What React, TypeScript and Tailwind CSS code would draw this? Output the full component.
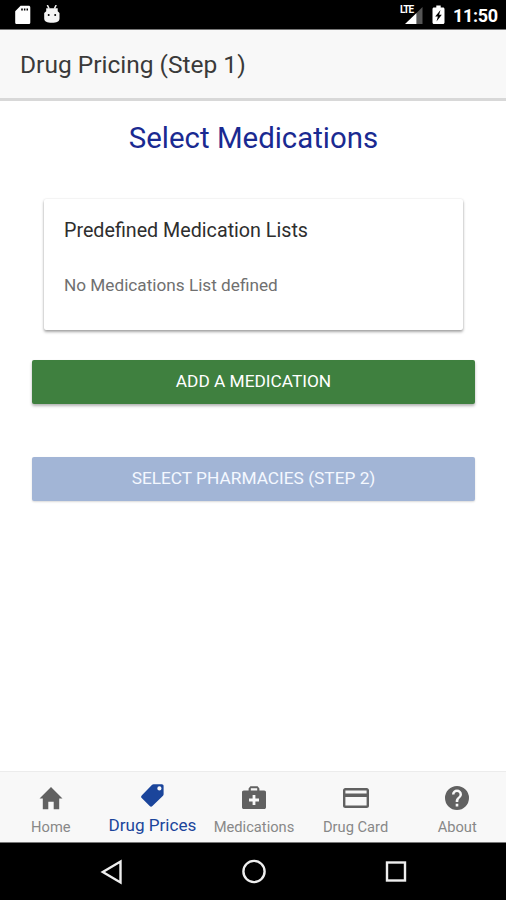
import type { ReactNode } from 'react'

const TABS: { label: string; icon: ReactNode; active?: boolean }[] = [
    {
        label: 'Home',
        icon: <path d="M13 2 24.500 13.600h-3.300v10.700h-5.500v-7.500h-5.400v7.500H4.800V13.600H1.500z" />,
    },
    {
        label: 'Drug Prices',
        active: true,
        icon: (
            <path
                fillRule="evenodd"
                d="M14.600 1.200h8.200c1.100 0 1.800.7 1.800 1.800v8.200c0 .6-.2 1.100-.6 1.500L13.400 23.100c-.8.8-1.900.8-2.700 0l-8-8c-.8-.8-.8-1.900 0-2.700L13.100 1.800c.4-.4.9-.6 1.500-.6zM20.400 3.300a2.100 2.100 0 1 0 0 4.200 2.100 2.100 0 0 0 0-4.200z"
            />
        ),
    },
    {
        label: 'Medications',
        icon: (
            <path
                fillRule="evenodd"
                d="M7.600 5.600V3.400L9.400 1.200h7.200l1.800 2.200v2.200h4.800c1.100 0 1.800.8 1.800 1.800v14.800c0 1.100-.7 1.900-1.800 1.900H2.800c-1.100 0-1.800-.8-1.800-1.900V7.400c0-1 .7-1.800 1.800-1.800zM9.800 5.600h6.400V3.300H9.800zM11.600 10v3.600H8v2.800h3.600V20h2.800v-3.600H18v-2.800h-3.600V10z"
            />
        ),
    },
    {
        label: 'Drug Card',
        icon: (
            <path
                fillRule="evenodd"
                d="M2.300 3h21.400C25 3 26 4 26 5.300v15.400c0 1.300-1 2.300-2.300 2.300H2.300C1 23 0 22 0 20.700V5.300C0 4 1 3 2.300 3zM2.400 5.400v3.100h21.200V5.400zM2.400 12v8.600h21.200V12z"
            />
        ),
    },
    {
        label: 'About',
        icon: (
            <path
                fillRule="evenodd"
                d="M13 1a12 12 0 1 0 0 24 12 12 0 0 0 0-24zM11.700 21.400v-2.600h2.600v2.600zM17 12.100l-1.200 1.200c-1 1-1.500 1.800-1.500 3.600h-2.600v-.6c0-1.500.6-2.600 1.500-3.500l1.600-1.600c.5-.4.7-1 .7-1.600a2.500 2.500 0 0 0-5 0H8a5 5 0 0 1 10 0c0 1-.4 1.800-1 2.500z"
            />
        ),
    },
]

function StatusBar() {
    return (
        <div className="flex h-[30px] shrink-0 items-center border-b border-[#777] bg-black pl-[15px] pr-[8px] text-white">
            <svg width="16" height="20" viewBox="0 0 16 20" fill="currentColor">
                <path
                    fillRule="evenodd"
                    d="M5.600.7h8C14.600.7 15.300 1.400 15.300 2.400v15c0 1-.7 1.700-1.700 1.700H1.900c-1 0-1.700-.7-1.700-1.700V6.200zM6.200 3.400v2h1.600v-2zM8.900 3.400v2h1.500v-2zM11.500 3.400v2H13v-2z"
                />
            </svg>
            <svg className="ml-[12px]" width="18" height="20" viewBox="0 0 18 20">
                <path d="m4.300 0 1.800 3.600M13.200 0l-1.800 3.600" stroke="#eee" strokeWidth="1.500" />
                <path
                    d="M3.200 3.200h11.500v3l1.800 1.800v5.400c0 2.900-2.800 4.300-7.600 4.300S1.200 16.300 1.200 13.400V8l2-1.800z"
                    fill="#f5f5f5"
                />
                <circle cx="5.700" cy="10.100" r="1" />
                <circle cx="12.200" cy="10.100" r="1" />
            </svg>

            <div className="relative ml-auto h-[20px] w-[24px]">
                <svg width="24" height="20" viewBox="0 0 24 20">
                    <path d="M21.500 2v17h-6V8z" fill="#555" />
                    <path d="M15.500 8v11H4z" fill="#fff" />
                </svg>
                <span className="absolute left-[-1px] top-0 text-[10px] font-bold leading-[10px] tracking-[-1px]">
                    LTE
                </span>
            </div>
            <svg className="ml-[7px]" width="13" height="20" viewBox="0 0 13 20">
                <path
                    d="M4.300.5h4.400v2h2.300c.9 0 1.500.6 1.500 1.500v13.600c0 .9-.6 1.500-1.500 1.500H2c-.9 0-1.500-.6-1.500-1.500V4c0-.9.6-1.500 1.500-1.500h2.300z"
                    fill="#fff"
                />
                <path d="M8.500 5 3.200 11.600h2.700L4.500 16.500l5.300-6.800H7.100z" fill="#000" />
            </svg>
            <span className="ml-[8px] w-[45px] whitespace-nowrap pt-[3px] text-[18px] font-bold leading-none tracking-[-0.3px]">
                11:50
            </span>
        </div>
    )
}

function TabBar() {
    return (
        <nav className="grid h-[71px] w-[508px] shrink-0 grid-cols-5 border-t border-[#ececec] bg-[#f8f8f8]">
            {TABS.map(({ label, icon, active }) => (
                <div
                    key={label}
                    className={`flex flex-col items-center whitespace-nowrap ${
                        active ? 'pt-[11px] text-[#1b459b]' : 'pt-[13px] text-[#616161]'
                    }`}
                >
                    <svg width="26" height="26" viewBox="0 0 26 26" fill="currentColor">
                        {icon}
                    </svg>
                    <span
                        className={
                            active
                                ? 'mt-[6px] text-[17.100px] leading-[20px]'
                                : 'mt-[7px] text-[14.700px] leading-[18px] text-[#888]'
                        }
                    >
                        {label}
                    </span>
                </div>
            ))}
        </nav>
    )
}

function SystemNav() {
    return (
        <div className="flex h-[58px] shrink-0 items-center justify-between border-t border-[#777] bg-black pl-[99px] pr-[97px]">
            <svg width="26" height="26" viewBox="0 0 26 26" fill="none" stroke="#eee" strokeWidth="2.400">
                <path d="M21.500 2.500v21L3.800 13z" />
            </svg>
            <svg width="26" height="26" viewBox="0 0 26 26" fill="none" stroke="#eee" strokeWidth="2.400">
                <circle cx="13" cy="12.500" r="10.600" />
            </svg>
            <svg width="26" height="26" viewBox="0 0 26 26" fill="none" stroke="#eee" strokeWidth="2.400">
                <rect x="4" y="3.500" width="18" height="18" />
            </svg>
        </div>
    )
}

export default function App() {
    return (
        <div className="flex h-[900px] w-[506px] flex-col overflow-hidden bg-white font-['Roboto',sans-serif]">
            <StatusBar />

            <header className="flex h-[71px] shrink-0 items-center border-b-[3px] border-[#d8d8d8] bg-[#f8f8f8] pl-[20px] pt-px">
                <h1 className="whitespace-nowrap text-[24.500px] leading-[30px] text-[#3a3a3a]">
                    Drug Pricing (Step 1)
                </h1>
            </header>

            <main className="flex-1 px-[32px] pt-[19px]">
                <h2 className="whitespace-nowrap pl-px text-center text-[29.400px] leading-[36px] text-[#1a2a91]">
                    Select Medications
                </h2>

                {/* Medication lists */}
                <section className="ml-[12px] mr-[11px] mt-[43px] h-[131px] rounded-[2px] bg-white px-[20px] pt-[20px] shadow-[0_2px_3px_rgba(0,0,0,0.35),0_0_2px_rgba(0,0,0,0.12)]">
                    <h3 className="whitespace-nowrap text-[19.700px] leading-[24px] text-[#2e2e2e]">
                        Predefined Medication Lists
                    </h3>
                    <p className="mt-[31px] whitespace-nowrap text-[17.200px] leading-[22px] text-[#707070]">
                        No Medications List defined
                    </p>
                </section>

                {/* Actions */}
                <button className="mt-[30px] block h-[44px] w-[443px] rounded-[2px] bg-[#3f803f] text-[17.300px] text-white shadow-[0_2px_3px_rgba(0,0,0,0.3)]">
                    ADD A MEDICATION
                </button>
                <button className="mt-[53px] block h-[44px] w-[443px] rounded-[2px] bg-[#a2b5d6] text-[17.300px] text-[#f4f8ff] shadow-[0_1px_2px_rgba(0,0,0,0.15)]">
                    SELECT PHARMACIES (STEP 2)
                </button>
            </main>

            <TabBar />
            <SystemNav />
        </div>
    )
}
